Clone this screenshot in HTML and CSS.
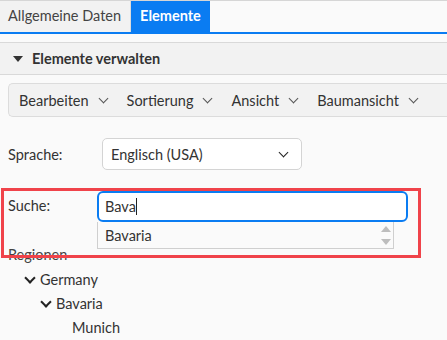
FILE: index.html
```html
<!DOCTYPE html>
<html lang="de">
<head>
    <meta charset="UTF-8">
    <title>Elemente</title>
    <link rel="stylesheet" href="styles.css">
</head>
<body>

    <div class="tabs">
        <div class="tab">Allgemeine Daten</div>
        <div class="tab active">Elemente</div>
    </div>

    <div class="panel">
        <div class="panel_header">
            <span class="caret"></span>
            Elemente verwalten
        </div>

        <div class="panel_body">
            <div class="toolbar">
                <span class="menu">Bearbeiten <span class="chev"></span></span>
                <span class="menu">Sortierung <span class="chev"></span></span>
                <span class="menu">Ansicht <span class="chev"></span></span>
                <span class="menu">Baumansicht <span class="chev"></span></span>
            </div>

            <div class="row">
                <label class="label">Sprache:</label>
                <div class="select">
                    Englisch (USA)
                    <span class="chev sel"></span>
                </div>
            </div>

            <div class="row search_row">
                <label class="label">Suche:</label>
                <div class="search_wrap">
                    <div class="search">Bava<span class="cursor"></span></div>
                    <div class="suggest">
                        Bavaria
                        <div class="scroll">
                            <span class="up"></span>
                            <span class="down"></span>
                        </div>
                    </div>
                </div>
                <div class="highlight"></div>
            </div>

            <div class="regions">Regionen</div>

            <ul class="tree">
                <li class="node"><span class="chev dark"></span>Germany</li>
                <li class="node lvl2"><span class="chev dark"></span>Bavaria</li>
                <li class="node lvl3">Munich</li>
            </ul>
        </div>
    </div>

</body>
</html>
```

FILE: styles.css
```css
body {
    margin: 0;
    background: #fafafa;
    font-family: 'Lato', sans-serif;
    font-size: 14.5px;
    color: #333;
    overflow: hidden;
}

.tabs {
    display: flex;
    height: 31px;
    border-top: 1px solid #d6d6d6;
    border-bottom: 2px solid #0a7cf2;
}

.tab {
    padding: 0 9px 0 8px;
    line-height: 30px;
    background: #f2f2f2;
    border-right: 1px solid #dcdcdc;
    color: #444;
}

.tab.active {
    padding: 0 9px;
    background: #0a7cf2;
    color: white;
    font-weight: bold;
    border-right: none;
}

.panel {
    margin-top: 8px;
}

.panel_header {
    height: 31px;
    display: flex;
    align-items: center;
    gap: 9px;
    padding-left: 13px;
    background: #f2f2f2;
    border-top: 1px solid #d9d9d9;
    border-bottom: 1px solid #d9d9d9;
    font-weight: bold;
    color: #333;
}

.caret {
    width: 0;
    height: 0;
    border-left: 5px solid transparent;
    border-right: 5px solid transparent;
    border-top: 6px solid #333;
}

.panel_body {
    padding: 8px 0 0 8px;
}

.toolbar {
    display: flex;
    gap: 16px;
    height: 32px;
    align-items: center;
    padding-left: 10px;
    background: #f2f2f2;
    border: 1px solid #dcdcdc;
    border-right: none;
    border-radius: 5px 0 0 5px;
    white-space: nowrap;
    overflow: hidden;
    color: #333;
}

.menu {
    display: flex;
    align-items: center;
    gap: 8px;
}

.chev {
    display: inline-block;
    width: 6px;
    height: 6px;
    border-right: 1.3px solid #555;
    border-bottom: 1.3px solid #555;
    transform: rotate(45deg);
    margin: 0 4px 4px 3px;
}

.chev.sel {
    border-color: #222;
    border-width: 1.6px;
}

.chev.dark {
    width: 6px;
    height: 6px;
    border-color: #222;
    border-width: 2px;
}

.row {
    display: flex;
    align-items: center;
    margin-top: 21px;
}

.label {
    width: 94px;
}

.select {
    width: 180px;
    height: 30px;
    display: flex;
    align-items: center;
    justify-content: space-between;
    padding: 0 10px 0 8px;
    background: white;
    border: 1px solid #d4d4d4;
    border-radius: 5px;
}

.search_row {
    position: relative;
    margin-top: 21px;
    align-items: flex-start;
}

.search_row .label {
    width: 89px;
    padding-top: 6px;
}

.search_wrap {
    position: relative;
}

.search {
    width: 301px;
    height: 27px;
    display: flex;
    align-items: center;
    padding-left: 6px;
    background: white;
    border: 2px solid #0a7cf2;
    border-radius: 6px;
}

.cursor {
    width: 1px;
    height: 17px;
    background: #222;
}

.suggest {
    position: absolute;
    top: 31px;
    left: 0;
    width: 288px;
    height: 26px;
    display: flex;
    align-items: center;
    padding-left: 7px;
    background: #fafafa;
    border: 1px solid #cfcfcf;
    border-top: none;
}

.scroll {
    position: absolute;
    right: 0;
    top: 0;
    width: 15px;
    height: 26px;
    display: flex;
    flex-direction: column;
    align-items: center;
    justify-content: space-around;
}

.up, .down {
    width: 0;
    height: 0;
    border-left: 5px solid transparent;
    border-right: 5px solid transparent;
}

.up {
    border-bottom: 6px solid #bdbdbd;
}

.down {
    border-top: 6px solid #bdbdbd;
}

.highlight {
    position: absolute;
    left: -7px;
    top: -3px;
    width: 414px;
    height: 64px;
    border: 3px solid #f0434a;
    pointer-events: none;
}

.regions {
    margin-top: 25px;
    line-height: 16px;
    color: #444;
}

.tree {
    list-style: none;
    margin: 0;
    padding: 0;
}

.node {
    height: 24px;
    display: flex;
    align-items: center;
    padding-left: 16px;
}

.tree .node:first-child {
    margin-top: 4px;
}

.node .chev {
    margin: 0 6px 3px 2px;
}

.lvl2 {
    padding-left: 32px;
}

.lvl3 {
    padding-left: 64px;
}
```
